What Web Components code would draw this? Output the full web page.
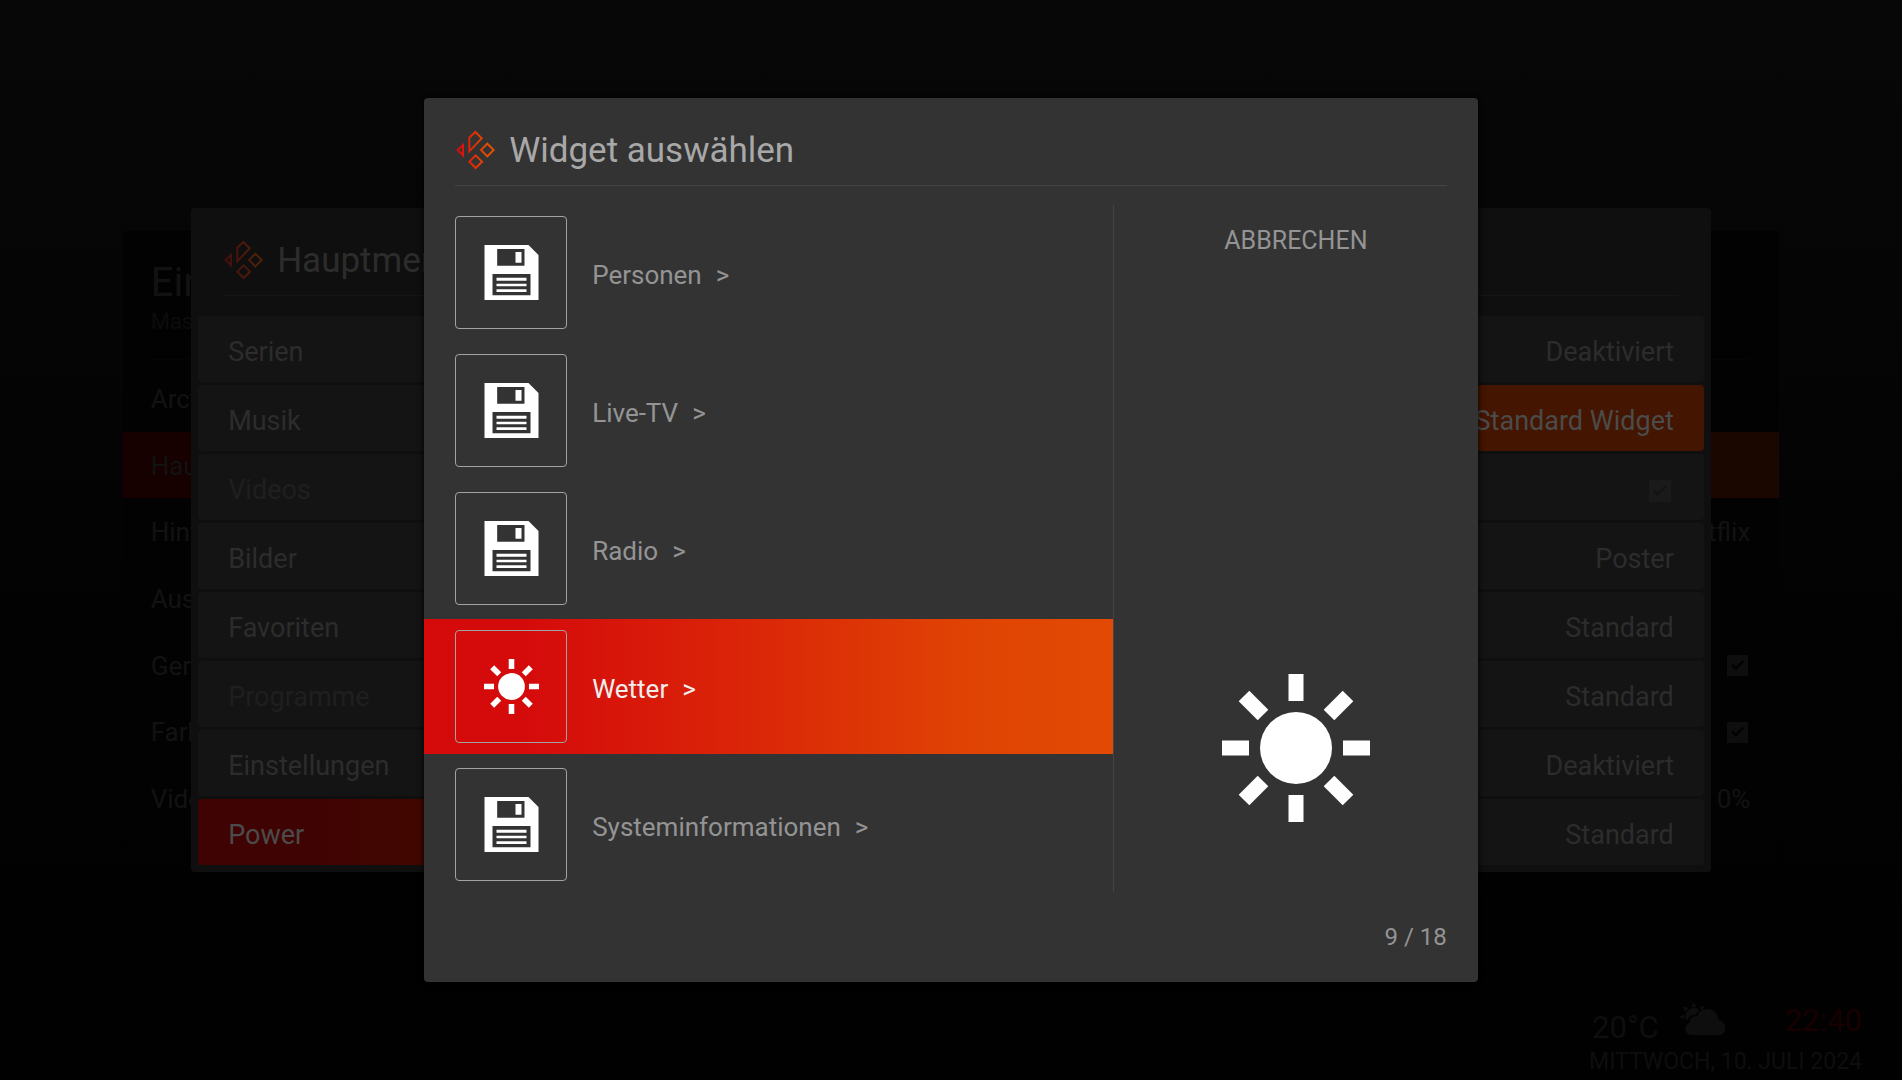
<!DOCTYPE html>
<html lang="de">
<head>
<meta charset="utf-8">
<title>Widget auswählen</title>
<style>
  body {
    display: grid;
    min-height: 100vh;
    margin: 0;
    background: linear-gradient(#070707, #050505 30%, #020202 60%, #010101);
    color: #a3a3a3;
    font-family: Roboto, "Liberation Sans", sans-serif;
    overflow: hidden;
  }

  /* every layer shares one cell, later ones lie on top */
  body > * {
    grid-area: 1 / 1;
  }
</style>
</head>
<body>
  <status-bar temperature="20°C" time="22:40">Mittwoch, 10. Juli 2024</status-bar>

  <settings-page heading="Ein" subtitle="Mas">
    <setting-row>Arct</setting-row>
    <setting-row active>Hau</setting-row>
    <setting-row value="Netflix">Hint</setting-row>
    <setting-row>Aus</setting-row>
    <setting-row checkbox>Ger</setting-row>
    <setting-row checkbox>Farb</setting-row>
    <setting-row value="0%">Vide</setting-row>
  </settings-page>

  <menu-dialog heading="Hauptmenü">
    <menu-item>Serien</menu-item>
    <menu-item>Musik</menu-item>
    <menu-item disabled>Videos</menu-item>
    <menu-item>Bilder</menu-item>
    <menu-item>Favoriten</menu-item>
    <menu-item disabled>Programme</menu-item>
    <menu-item>Einstellungen</menu-item>
    <menu-item active="start">Power</menu-item>
    <menu-item slot="options">Deaktiviert</menu-item>
    <menu-item slot="options" active="end">Standard Widget</menu-item>
    <menu-item slot="options" disabled checkbox></menu-item>
    <menu-item slot="options">Poster</menu-item>
    <menu-item slot="options">Standard</menu-item>
    <menu-item slot="options">Standard</menu-item>
    <menu-item slot="options">Deaktiviert</menu-item>
    <menu-item slot="options">Standard</menu-item>
  </menu-dialog>

  <select-dialog heading="Widget auswählen" position="9 / 18">
    <widget-item icon="floppy">Personen</widget-item>
    <widget-item icon="floppy">Live-TV</widget-item>
    <widget-item icon="floppy">Radio</widget-item>
    <widget-item icon="sun" active>Wetter</widget-item>
    <widget-item icon="floppy">Systeminformationen</widget-item>
  </select-dialog>

<script>
  const icons = {
    floppy: `
      <svg viewBox="0 0 162 165" aria-hidden="true">
        <path fill="#fff" fill-rule="evenodd" d="M0 0H132L162 30V165H0Z
          M38 12V62H120V12Z M24 87V151H138V87Z"/>
        <path fill="#fff" d="M93 21h18v32H93Z M36 98h90v9H36Z M36 116h90v8H36Z M36 133h90v8H36Z"/>
      </svg>`,
    sun: `
      <svg viewBox="-74 -74 148 148" aria-hidden="true">
        <circle r="36" fill="#fff"/>
        <path stroke="#fff" stroke-width="15" d="M0 -74V-47 M0 47V74 M-74 0H-47 M47 0H74
          M-52 -52L-33 -33 M33 33L52 52 M52 -52L33 -33 M-33 33L-52 52"/>
      </svg>`,
    cloud: `
      <svg viewBox="0 0 140 102" aria-hidden="true">
        <g fill="#0e0e0e">
          <path d="M43 0L51 16H36Z M12 13L28 18L17 29Z M75 11L71 26L60 16Z M0 45L14 37V52Z"/>
          <path d="M20 53A26 26 0 0 1 62 25Q53 30 49 39Q32 37 24 55Z"/>
          <path d="M36 99A19 19 0 0 1 32 62Q30 41 54 42Q62 20 86 21Q114 23 118 53Q138 57 139 77Q138 98 118 99Z"/>
        </g>
      </svg>`
  };

  class KodiLogo extends HTMLElement {
    connectedCallback() {
      this.attachShadow({ mode: "open" }).innerHTML = `
        <style>
          :host {
            display: block;
            width: 40px;
            height: 40px;
          }

          svg {
            display: block;
          }
        </style>
        <svg viewBox="0 0 120 120" aria-hidden="true">
          <defs>
            <linearGradient id="glow" gradientUnits="userSpaceOnUse" x1="10" y1="0" x2="100" y2="0">
              <stop offset="0" stop-color="#d40b0c"/>
              <stop offset="1" stop-color="#e65000"/>
            </linearGradient>
          </defs>
          <path fill="none" stroke="url(#glow)" stroke-width="6"
            d="M8 60L24 45V76Z M43 64V23L61 6L80 25Z M97 41L116 60L97 79L78 60Z M62 76L81 95L62 114L43 95Z"/>
        </svg>
      `;
    }
  }

  class StatusBar extends HTMLElement {
    connectedCallback() {
      this.attachShadow({ mode: "open" }).innerHTML = `
        <style>
          :host {
            display: block;
            align-self: end;
            justify-self: end;
            padding: 0 40px 4px 0;
            color: #0e0e0e;
            font-size: 23px;
            line-height: 28px;
            text-transform: uppercase;
          }

          .row {
            display: flex;
            align-items: end;
            gap: 20px;
            padding-left: 3px;
            font-size: 31px;
            line-height: 40px;
          }

          svg {
            display: block;
            width: 47px;
            height: 34px;
            padding-bottom: 12px;
          }

          time {
            margin-left: auto;
            padding-bottom: 7px;
            color: #180000;
          }
        </style>
        <div class="row">
          <span>${this.getAttribute("temperature")}</span>
          ${icons.cloud}
          <time>${this.getAttribute("time")}</time>
        </div>
        <slot></slot>
      `;
    }
  }

  class SettingsPage extends HTMLElement {
    connectedCallback() {
      this.attachShadow({ mode: "open" }).innerHTML = `
        <style>
          :host {
            display: block;
            place-self: center;
            box-sizing: border-box;
            width: 87.1%;
            margin-bottom: 8px;
            padding-bottom: 10px;
            border-radius: 4px;
            background: #020202;
            color: #121212;
          }

          header {
            margin: 0 28px;
            padding: 28px 0 22px;
            border-bottom: 1px solid #050505;
          }

          h2, p {
            margin: 0;
            font-weight: 400;
          }

          h2 {
            font-size: 40px;
            line-height: 48px;
          }

          p {
            color: #0c0c0c;
            font-size: 22px;
            line-height: 30px;
          }

          .rows {
            display: grid;
            grid-auto-rows: 1fr;
            min-height: 466px;
            padding-top: 5px;
          }
        </style>
        <header>
          <h2>${this.getAttribute("heading")}</h2>
          <p>${this.getAttribute("subtitle")}</p>
        </header>
        <div class="rows"><slot></slot></div>
      `;
    }
  }

  class SettingRow extends HTMLElement {
    connectedCallback() {
      const value = this.getAttribute("value") || "";
      this.attachShadow({ mode: "open" }).innerHTML = `
        <style>
          :host {
            display: grid;
            font-size: 26px;
            line-height: 32px;
          }

          :host([active]) {
            background: linear-gradient(90deg, #160000 15%, #190700 85%);
          }

          button, label {
            display: flex;
            align-items: center;
            justify-content: space-between;
            padding: 2px 29px 0 28px;
            border: 0;
            background: none;
            color: inherit;
            font: inherit;
          }

          input {
            appearance: none;
            display: grid;
            width: 21px;
            height: 21px;
            margin: 0 2px 0 0;
            background: #0e0e0e;
          }

          input::before {
            content: "";
            margin: 4px;
            background: #020202;
            clip-path: polygon(0 52%, 12% 38%, 34% 60%, 88% 8%, 100% 20%, 34% 88%);
          }
        </style>
        ${this.hasAttribute("checkbox")
          ? `<label><slot></slot><input type="checkbox" checked></label>`
          : `<button type="button"><slot></slot><span>${value}</span></button>`}
      `;
    }
  }

  class MenuDialog extends HTMLElement {
    connectedCallback() {
      this.attachShadow({ mode: "open" }).innerHTML = `
        <style>
          :host {
            display: block;
            place-self: center;
            box-sizing: border-box;
            width: 79.9%;
            padding: 0 7px 7px;
            border-radius: 4px;
            background: #0f0f0f;
            color: #2c2c2c;
          }

          header {
            display: flex;
            align-items: center;
            gap: 14px;
            height: 87px;
            margin: 0 25px 20px;
            border-bottom: 1px solid #161616;
          }

          kodi-logo {
            margin-top: 16px;
            opacity: 0.28;
          }

          h2 {
            margin: 19px 0 0;
            font-size: 35px;
            font-weight: 400;
            line-height: 44px;
          }

          .columns {
            display: grid;
            grid-template-columns: 1fr 1fr;
          }

          .column {
            display: grid;
            gap: 3px;
          }

          .options {
            text-align: right;
          }
        </style>
        <header>
          <kodi-logo></kodi-logo>
          <h2>${this.getAttribute("heading")}</h2>
        </header>
        <div class="columns">
          <div class="column"><slot></slot></div>
          <div class="column options"><slot name="options"></slot></div>
        </div>
      `;
    }
  }

  class MenuItem extends HTMLElement {
    connectedCallback() {
      const disabled = this.hasAttribute("disabled") ? "disabled" : "";
      this.attachShadow({ mode: "open" }).innerHTML = `
        <style>
          :host {
            display: grid;
            min-height: 66px;
            border-radius: 4px 0 0 4px;
            background: #141414;
            font-size: 27px;
            line-height: 32px;
          }

          :host([slot]) {
            border-radius: 0 4px 4px 0;
          }

          :host([disabled]) {
            color: #1f1f1f;
          }

          :host([active]) {
            background: linear-gradient(90deg, #400303 15%, #430800 35%, #441500 85%);
            color: #4b4b4b;
          }

          :host([active="end"]) {
            background: #441500;
          }

          button, label {
            display: block;
            box-sizing: border-box;
            width: 100%;
            padding: 5px 30px 0;
            border: 0;
            background: none;
            color: inherit;
            font: inherit;
            text-align: inherit;
          }

          label {
            display: flex;
            align-items: center;
            justify-content: end;
          }

          input {
            appearance: none;
            display: grid;
            width: 22px;
            height: 22px;
            margin: 3px 3px 0 0;
            background: #1a1a1a;
          }

          input::before {
            content: "";
            margin: 4px;
            background: #131313;
            clip-path: polygon(0 52%, 12% 38%, 34% 60%, 88% 8%, 100% 20%, 34% 88%);
          }
        </style>
        ${this.hasAttribute("checkbox")
          ? `<label><slot></slot><input type="checkbox" aria-label="Widget" checked ${disabled}></label>`
          : `<button type="button" ${disabled}><slot></slot></button>`}
      `;
    }
  }

  class SelectDialog extends HTMLElement {
    connectedCallback() {
      this.attachShadow({ mode: "open" }).innerHTML = `
        <style>
          :host {
            display: block;
            place-self: center;
            width: 55.4%;
            border-radius: 4px;
            background: #333;
            box-shadow: 0 0 6px #000;
            color: #949494;
          }

          header {
            display: flex;
            align-items: center;
            gap: 14px;
            height: 87px;
            margin: 0 31px 19px;
            border-bottom: 1px solid #444;
          }

          kodi-logo {
            margin-top: 16px;
          }

          h2 {
            margin: 19px 0 0;
            color: #a8a8a8;
            font-size: 35px;
            font-weight: 400;
            line-height: 44px;
          }

          main {
            display: grid;
            grid-template-columns: 689fr 365fr;
          }

          .list {
            display: grid;
            gap: 3px;
          }

          aside {
            display: flex;
            flex-direction: column;
            align-items: center;
            justify-content: space-between;
            border-left: 1px solid #444;
            padding: 20px 0 70px;
          }

          aside button {
            padding: 0;
            border: 0;
            background: none;
            color: inherit;
            font: inherit;
            font-size: 25px;
            line-height: 32px;
          }

          aside svg {
            width: 148px;
          }

          footer {
            padding: 30px 31px 30px;
            font-size: 24px;
            line-height: 30px;
            text-align: right;
          }
        </style>
        <header>
          <kodi-logo></kodi-logo>
          <h2>${this.getAttribute("heading")}</h2>
        </header>
        <main>
          <div class="list"><slot></slot></div>
          <aside>
            <button type="button">ABBRECHEN</button>
            ${icons.sun}
          </aside>
        </main>
        <footer>${this.getAttribute("position")}</footer>
      `;
    }
  }

  class WidgetItem extends HTMLElement {
    connectedCallback() {
      this.attachShadow({ mode: "open" }).innerHTML = `
        <style>
          :host {
            display: grid;
            font-size: 26px;
            line-height: 32px;
          }

          :host([active]) {
            background: linear-gradient(90deg, #d50b0b 15%, #da2408 45%, #e04404 80%, #e24a04);
            color: #eee;
          }

          button {
            display: flex;
            align-items: center;
            padding: 11px 31px;
            border: 0;
            background: none;
            color: inherit;
            font: inherit;
          }

          .thumb {
            display: grid;
            place-items: center;
            width: 110px;
            height: 111px;
            border: 1px solid #a3a3a3;
            border-radius: 4px;
          }

          .label {
            display: flex;
            gap: 14px;
            padding: 4px 0 0 25px;
          }

          svg {
            width: 55px;
            height: 55px;
          }
        </style>
        <button type="button">
          <span class="thumb">${icons[this.getAttribute("icon")]}</span>
          <span class="label"><slot></slot><span>&gt;</span></span>
        </button>
      `;
    }
  }

  customElements.define("kodi-logo", KodiLogo);
  customElements.define("status-bar", StatusBar);
  customElements.define("settings-page", SettingsPage);
  customElements.define("setting-row", SettingRow);
  customElements.define("menu-dialog", MenuDialog);
  customElements.define("menu-item", MenuItem);
  customElements.define("select-dialog", SelectDialog);
  customElements.define("widget-item", WidgetItem);
</script>
</body>
</html>
